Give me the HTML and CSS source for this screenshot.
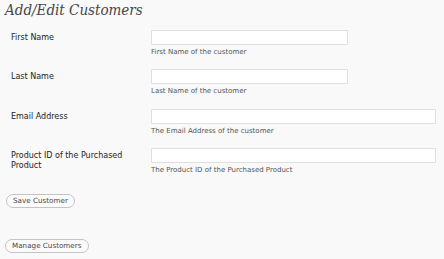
FILE: index.html
```html
<!DOCTYPE html>
<html>
<head>
    <meta charset="UTF-8">
    <title>Add/Edit Customers</title>
    <link rel="stylesheet" href="styles.css">
</head>
<body>
    <div class="wrap">
        <h2 class="page-title">Add/Edit Customers</h2>
        <form class="customer-form">
            <div class="form-row">
                <label class="field-label" for="first-name">First Name</label>
                <div class="field">
                    <input class="field-input" id="first-name" type="text">
                    <div class="field-desc">First Name of the customer</div>
                </div>
            </div>
            <div class="form-row">
                <label class="field-label" for="last-name">Last Name</label>
                <div class="field">
                    <input class="field-input" id="last-name" type="text">
                    <div class="field-desc">Last Name of the customer</div>
                </div>
            </div>
            <div class="form-row">
                <label class="field-label" for="email">Email Address</label>
                <div class="field">
                    <input class="field-input wide" id="email" type="text">
                    <div class="field-desc">The Email Address of the customer</div>
                </div>
            </div>
            <div class="form-row">
                <label class="field-label" for="product-id">Product ID of the Purchased Product</label>
                <div class="field">
                    <input class="field-input wide" id="product-id" type="text">
                    <div class="field-desc">The Product ID of the Purchased Product</div>
                </div>
            </div>
            <div class="submit-row">
                <button class="btn" type="button">Save Customer</button>
            </div>
        </form>
        <div class="manage-row">
            <button class="btn" type="button">Manage Customers</button>
        </div>
    </div>
</body>
</html>
```

FILE: styles.css
```css
*{
    margin: 0;
    padding: 0;
    box-sizing: border-box;
}
html,body{
    width: 100%;
    height: 100%;
}
body{
    background-color: #f9f9f9;
    font-family: "DejaVu Sans", Verdana, sans-serif;
    color: #333333;
}
.page-title{
    margin: 1px 0 5px 5px;
    font-family: "DejaVu Serif", Georgia, serif;
    font-style: italic;
    font-weight: normal;
    font-stretch: condensed;
    font-size: 15px;
    line-height: 18px;
    color: #464646;
}
.form-row{
    display: flex;
    padding: 6px 0 6.33px;
}
.field-label{
    width: 151px;
    padding: 3px 12px 0 11px;
    font-size: 8px;
    line-height: 10.5px;
    color: #222222;
}
.field{
    display: flex;
    flex-direction: column;
}
.field-input{
    display: block;
    width: 197px;
    height: 15px;
    background-color: #ffffff;
    border: 1px solid #dfdfdf;
    border-radius: 1px;
    outline: none;
}
.field-input.wide{
    width: 285px;
}
.field-desc{
    margin-top: 3px;
    font-size: 7px;
    line-height: 9px;
    color: #555555;
}
.submit-row{
    padding: 13px 0 0 6px;
}
.manage-row{
    padding: 31px 0 0 5px;
}
.btn{
    display: block;
    height: 14px;
    padding: 0 6px;
    font-family: "DejaVu Sans", Verdana, sans-serif;
    font-size: 7.2px;
    line-height: 12px;
    color: #464646;
    background-color: #fbfbfb;
    border: 1px solid #c4c4c4;
    border-radius: 8px;
}
```
